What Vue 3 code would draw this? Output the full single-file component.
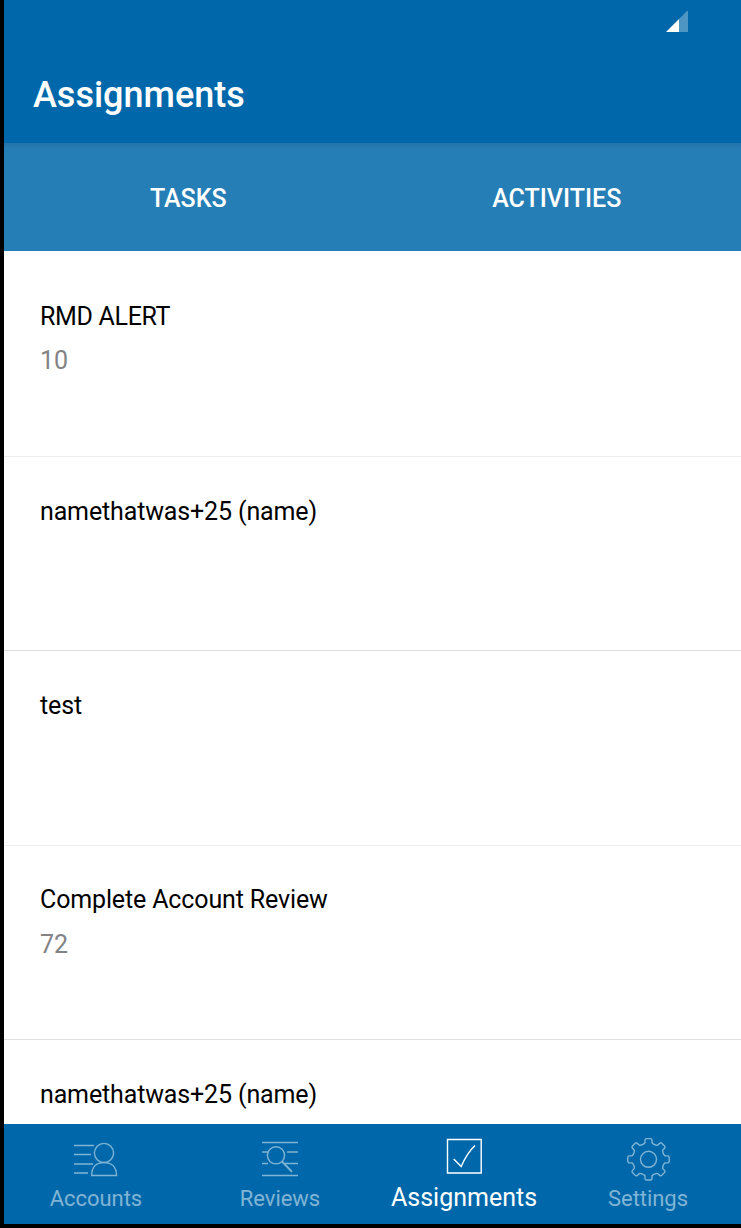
<script setup>
const tasks = [
  { title: 'RMD ALERT', count: '10', caps: true },
  { title: 'namethatwas+25 (name)' },
  { title: 'test' },
  { title: 'Complete Account Review', count: '72' },
  { title: 'namethatwas+25 (name)' },
]

function gearPath() {
  const tooth = [[-5, -15.2], [-3.6, -16.4], [-3.4, -19.8], [-2.4, -20.7], [2.4, -20.7], [3.4, -19.8], [3.6, -16.4], [5, -15.2]]
  const points = []
  for (let i = 0; i < 8; i++) {
    const a = (i * Math.PI) / 4
    for (const [x, y] of tooth) {
      points.push(`${(x * Math.cos(a) - y * Math.sin(a)).toFixed(2)} ${(x * Math.sin(a) + y * Math.cos(a)).toFixed(2)}`)
    }
  }
  return `M${points.join('L')}Z`
}
const gear = gearPath()
</script>

<template>
  <div class="device">
    <div class="screen">
      <header class="appbar">
        <svg class="signal" width="22" height="22" viewBox="0 0 22 22">
          <path d="M0 21 13 8V21Z" fill="#fff" />
          <path d="M13 8 21 0H22V21H13Z" fill="#fff" fill-opacity=".3" />
        </svg>
        <h1>Assignments</h1>
      </header>
      <nav class="tabs">
        <div>TASKS</div>
        <div>ACTIVITIES</div>
      </nav>
      <main class="list">
        <section v-for="(t, i) in tasks" :key="i" class="row">
          <div class="name" :class="{ caps: t.caps }">{{ t.title }}</div>
          <div v-if="t.count" class="count">{{ t.count }}</div>
        </section>
      </main>
      <footer class="bottom">
        <div class="item">
          <svg width="46" height="44" viewBox="73 1137 46 44">
            <path d="M74 1145.5H94M74 1154.5H91M74 1164H93M74 1173H88" />
            <circle cx="104" cy="1153" r="9.6" />
            <path d="M91.7 1175.5C91.7 1167 96.5 1162.5 104 1162.5S116.5 1167 116.5 1175.5Z" />
          </svg>
          <span class="label">Accounts</span>
        </div>
        <div class="item">
          <svg width="46" height="44" viewBox="257 1137 46 44">
            <path d="M262 1142.5H298M262 1175.5H298M262 1152H268M287 1152H298M262 1163.5H268M285 1163.5H298" />
            <circle cx="276" cy="1155.3" r="8.6" />
            <path d="M282 1161.5 292 1171.8" stroke-width="1.8" />
          </svg>
          <span class="label">Reviews</span>
        </div>
        <div class="item active">
          <svg width="46" height="44" viewBox="441 1137 46 44">
            <path d="M447.5 1139.5H481.2V1173H447.5Z" />
            <path d="M453.7 1159 461.2 1166.5C465 1157.5 469 1151 475 1145.4" />
          </svg>
          <span class="label">Assignments</span>
        </div>
        <div class="item">
          <svg width="46" height="44" viewBox="-23.5 -22.3 46 44">
            <path :d="gear" />
            <circle r="8" />
          </svg>
          <span class="label">Settings</span>
        </div>
      </footer>
    </div>
  </div>
</template>

<style>
body { margin: 0; overflow: hidden; }
</style>

<style scoped>
.device {
  box-sizing: border-box;
  width: 741px;
  height: 1228px;
  padding: 0 0 4px 4px;
  background: #000;
  font-family: Roboto, "Liberation Sans", sans-serif;
}
.screen {
  display: flex;
  flex-direction: column;
  height: 1224px;
  overflow: hidden;
  background: #fff;
}
.appbar {
  display: flex;
  flex-direction: column;
  flex: none;
  height: 143px;
  background: #0068aa;
}
.signal { margin: 11px 0 0 662px; flex: none; }
h1 {
  margin: 41px 0 0 29px;
  font-size: 36px;
  font-weight: 500;
  line-height: 42px;
  color: #fff;
}
.tabs {
  display: flex;
  flex: none;
  height: 108px;
  background: linear-gradient(#2373a9, #257eb5 6px);
  color: #fff;
  font-size: 25px;
  font-weight: 500;
  line-height: 112px;
  text-align: center;
}
.tabs div { flex: 1; }
.list { flex: 1; min-height: 0; overflow: hidden; padding-top: 11.4px; }
.row {
  box-sizing: border-box;
  height: 194.4px;
  padding: 38.8px 36px 0;
  border-bottom: 1px solid #e0e0e0;
}
.row:nth-child(odd) { border-color: #eeeeee; }
.name { font-size: 25px; line-height: 32px; letter-spacing: -0.14px; color: #000; }
.caps { letter-spacing: -0.33px; }
.count { margin-top: 12.2px; font-size: 25px; line-height: 32px; color: #828385; }
.bottom {
  display: flex;
  flex: none;
  box-sizing: border-box;
  height: 100px;
  padding-right: 1px;
  background: #0068aa;
  color: #80b4d5;
}
.item {
  display: flex;
  flex: 1;
  flex-direction: column;
  align-items: center;
  padding-top: 13px;
}
.item svg { flex: none; fill: none; stroke: currentColor; stroke-width: 1.4; }
.label { margin-top: 4px; font-size: 22px; line-height: 28px; letter-spacing: -0.05px; }
.active { color: #fff; }
.active .label { margin-top: 3px; font-size: 25px; letter-spacing: 0; }
</style>
